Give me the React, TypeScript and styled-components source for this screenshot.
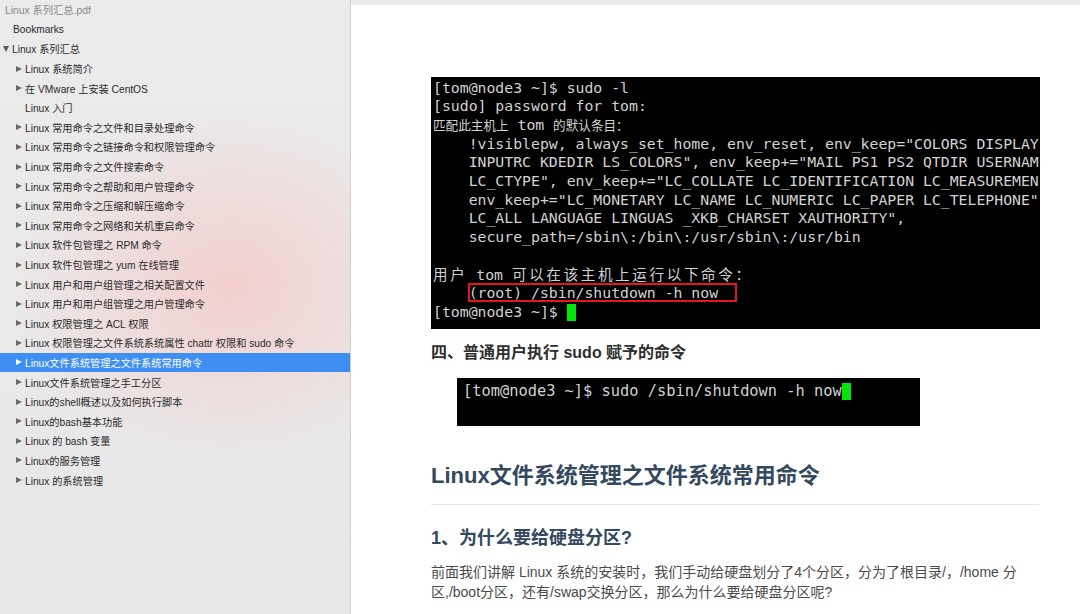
import React from "react";
import styled, { createGlobalStyle, css } from "styled-components";

const GlobalStyle = createGlobalStyle`
  html, body { margin: 0; padding: 0; }
  body { overflow: hidden; background: #fff; }
  * { box-sizing: border-box; }
`;

const Page = styled.div`
  display: flex;
  width: 1080px;
  height: 614px;
  overflow: hidden;
`;

const Sidebar = styled.nav`
  width: 351px;
  flex: none;
  height: 100%;
  border-right: 1px solid #d0d0d0;
  background:
    radial-gradient(ellipse 220px 180px at 230px 285px, rgba(246, 200, 200, 0.8), rgba(246, 200, 200, 0) 100%),
    linear-gradient(180deg, #ebebeb 0%, #e7e7e7 100%);
  font-family: "Liberation Sans", "Noto Sans CJK SC", sans-serif;
  font-size: 10.2px;
  color: #2a2a2a;
  display: flex;
  flex-direction: column;
`;

const Row = styled.div<{ $indent: number; $selected?: boolean; $muted?: boolean }>`
  height: 19.6px;
  flex: none;
  display: flex;
  align-items: center;
  padding-left: ${(p) => p.$indent}px;
  white-space: nowrap;
  ${(p) =>
    p.$selected &&
    css`
      background: #3f8ef4;
      color: #fff;
    `}
  ${(p) =>
    p.$muted &&
    css`
      color: #8a8a8a;
      font-size: 10.3px;
    `}
`;

const Arrow = styled.span<{ $open?: boolean; $light?: boolean }>`
  width: 0;
  height: 0;
  flex: none;
  margin-right: 3px;
  ${(p) =>
    p.$open
      ? css`
          border-left: 3.5px solid transparent;
          border-right: 3.5px solid transparent;
          border-top: 6px solid #5a5a5a;
        `
      : css`
          border-top: 3.5px solid transparent;
          border-bottom: 3.5px solid transparent;
          border-left: 6px solid ${p.$light ? "#ffffff" : "#6a6a6a"};
        `}
`;

const Main = styled.main`
  flex: 1;
  height: 100%;
  background: #fff;
  border-top: 5px solid #ececec;
  overflow: hidden;
`;

const Article = styled.article`
  width: 608px;
  margin-left: 80px;
  padding-top: 72px;
  font-family: "Liberation Sans", "Noto Sans CJK SC", sans-serif;
`;

const Terminal = styled.div<{ $size: number; $w: number; $h: number; $indent?: number; $padTop: number; $padLeft: number }>`
  background: #000;
  color: #d2d2d2;
  font-family: "DejaVu Sans Mono", monospace;
  font-size: ${(p) => p.$size}px;
  line-height: 18.7px;
  width: ${(p) => p.$w}px;
  height: ${(p) => p.$h}px;
  margin-left: ${(p) => p.$indent ?? 0}px;
  padding: ${(p) => p.$padTop}px 0 0 ${(p) => p.$padLeft}px;
  overflow: hidden;
`;

const Line = styled.div`
  height: 18.7px;
  white-space: pre;
`;

const Cjk = styled.span<{ $size: number; $spacing?: number }>`
  font-family: "Noto Sans CJK SC", sans-serif;
  font-size: ${(p) => p.$size}px;
  letter-spacing: ${(p) => p.$spacing ?? 0}px;
`;

const Marked = styled.span`
  outline: 2px solid #e3171c;
  outline-offset: -1px;
`;

const Cursor = styled.span<{ $h: number }>`
  display: inline-block;
  width: 9px;
  height: ${(p) => p.$h}px;
  background: #00e60a;
  vertical-align: middle;
`;

const SubHeading = styled.h4`
  margin: 13px 0 14px;
  font-size: 16px;
  line-height: 22px;
  font-weight: bold;
  color: #2e2e2e;
`;

const Title = styled.h1`
  margin: 35px 0 0;
  padding-bottom: 13px;
  border-bottom: 1px solid #e4e4e4;
  font-size: 22px;
  line-height: 30px;
  font-weight: bold;
  color: #34495e;
`;

const Section = styled.h2`
  margin: 20px 0 12px;
  font-size: 18px;
  line-height: 26px;
  font-weight: bold;
  color: #34495e;
`;

const Para = styled.p`
  margin: 0;
  font-size: 14px;
  line-height: 19.5px;
  color: #4a4a4a;
`;

type Item = { label: string; leaf?: boolean; selected?: boolean };

const items: Item[] = [
  { label: "Linux 系统简介" },
  { label: "在 VMware 上安装 CentOS" },
  { label: "Linux 入门", leaf: true },
  { label: "Linux 常用命令之文件和目录处理命令" },
  { label: "Linux 常用命令之链接命令和权限管理命令" },
  { label: "Linux 常用命令之文件搜索命令" },
  { label: "Linux 常用命令之帮助和用户管理命令" },
  { label: "Linux 常用命令之压缩和解压缩命令" },
  { label: "Linux 常用命令之网络和关机重启命令" },
  { label: "Linux 软件包管理之 RPM 命令" },
  { label: "Linux 软件包管理之 yum 在线管理" },
  { label: "Linux 用户和用户组管理之相关配置文件" },
  { label: "Linux 用户和用户组管理之用户管理命令" },
  { label: "Linux 权限管理之 ACL 权限" },
  { label: "Linux 权限管理之文件系统系统属性 chattr 权限和 sudo 命令" },
  { label: "Linux文件系统管理之文件系统常用命令", selected: true },
  { label: "Linux文件系统管理之手工分区" },
  { label: "Linux的shell概述以及如何执行脚本" },
  { label: "Linux的bash基本功能" },
  { label: "Linux 的 bash 变量" },
  { label: "Linux的服务管理" },
  { label: "Linux 的系统管理" },
];

export default function App() {
  return (
    <>
      <GlobalStyle />
      <Page>
        <Sidebar>
          <Row $indent={5} $muted>
            Linux 系列汇总.pdf
          </Row>
          <Row $indent={13}>Bookmarks</Row>
          <Row $indent={3}>
            <Arrow $open />
            Linux 系列汇总
          </Row>
          {items.map((it) => (
            <Row key={it.label} $indent={it.leaf ? 25 : 16} $selected={it.selected}>
              {!it.leaf && <Arrow $light={it.selected} />}
              {it.label}
            </Row>
          ))}
        </Sidebar>
        <Main>
          <Article>
            <Terminal $size={14.8} $w={609} $h={252} $padTop={1.5} $padLeft={2}>
              <Line>[tom@node3 ~]$ sudo -l</Line>
              <Line>[sudo] password for tom:</Line>
              <Line>
                <Cjk $size={12.6}>匹配此主机上</Cjk> tom <Cjk $size={12.6}>的默认条目：</Cjk>
              </Line>
              <Line>{'    !visiblepw, always_set_home, env_reset, env_keep="COLORS DISPLAY'}</Line>
              <Line>{'    INPUTRC KDEDIR LS_COLORS", env_keep+="MAIL PS1 PS2 QTDIR USERNAM'}</Line>
              <Line>{'    LC_CTYPE", env_keep+="LC_COLLATE LC_IDENTIFICATION LC_MEASUREMEN'}</Line>
              <Line>{'    env_keep+="LC_MONETARY LC_NAME LC_NUMERIC LC_PAPER LC_TELEPHONE"'}</Line>
              <Line>{'    LC_ALL LANGUAGE LINGUAS _XKB_CHARSET XAUTHORITY",'}</Line>
              <Line>{"    secure_path=/sbin\\:/bin\\:/usr/sbin\\:/usr/bin"}</Line>
              <Line> </Line>
              <Line>
                <Cjk $size={14.6} $spacing={2.6}>用户</Cjk> tom{" "}
                <Cjk $size={14.6} $spacing={2.6}>可以在该主机上运行以下命令：</Cjk>
              </Line>
              <Line>
                {"    "}
                <Marked>{"(root) /sbin/shutdown -h now  "}</Marked>
              </Line>
              <Line>
                {"[tom@node3 ~]$ "}
                <Cursor $h={17} />
              </Line>
            </Terminal>

            <SubHeading>四、普通用户执行 sudo 赋予的命令</SubHeading>

            <Terminal $size={15.35} $w={463} $h={48} $indent={26} $padTop={3.5} $padLeft={6}>
              <Line>
                [tom@node3 ~]$ sudo /sbin/shutdown -h now
                <Cursor $h={17} />
              </Line>
            </Terminal>

            <Title>Linux文件系统管理之文件系统常用命令</Title>
            <Section>1、为什么要给硬盘分区?</Section>
            <Para>
              前面我们讲解 Linux 系统的安装时，我们手动给硬盘划分了4个分区，分为了根目录/，/home 分区,/boot分区，还有/swap交换分区，那么为什么要给硬盘分区呢?
            </Para>
          </Article>
        </Main>
      </Page>
    </>
  );
}
